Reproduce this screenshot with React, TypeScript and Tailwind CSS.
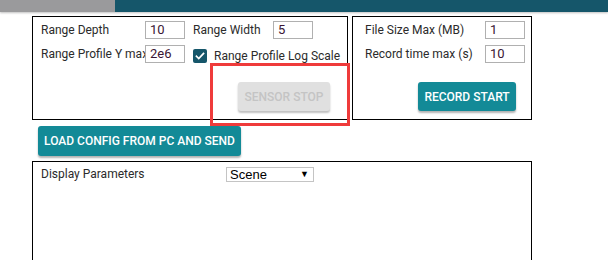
const label = "text-[12px] text-[#2b2b2b] whitespace-nowrap";

function Field({ value }: { value: string }) {
  return (
    <div className="relative z-10 h-[18px] w-[40px] shrink-0 border border-[#b0b0b0] bg-white pl-[4px] text-[13px] leading-[16px] text-[#3a1634]">
      {value}
    </div>
  );
}

export default function App() {
  return (
    <div className="relative h-[260px] w-[608px] overflow-hidden bg-white font-['Roboto',sans-serif]">
      <div className="flex h-[12px] shadow-[0_1px_2px_rgba(0,0,0,0.25)]">
        <div className="w-[115px] bg-[#9a9a9c]" />
        <div className="flex-1 bg-[#15566a]" />
      </div>

      <div className="flex pl-[32px] pt-[4px]">
        {/* range settings */}
        <div className="relative h-[104px] w-[316px] border border-black px-[8px] pt-[4px]">
          <div className="flex h-[18px] items-center">
            <span className={`${label} w-[104px]`}>Range Depth</span>
            <Field value="10" />
            <span className={`${label} ml-[8px] w-[80px]`}>Range Width</span>
            <Field value="5" />
          </div>
          <div className="mt-[6px] flex h-[18px] items-center">
            <span className={`${label} w-[104px] shrink-0`}>Range Profile Y max</span>
            <Field value="2e6" />
            <div className="ml-[8px] mt-[4px] flex items-center">
              <span className="flex h-[14px] w-[14px] items-center justify-center rounded-[2px] bg-[#15566a]">
                <svg viewBox="0 0 24 24" className="h-[12px] w-[12px]" fill="none" stroke="white" strokeWidth="3.5" strokeLinecap="square">
                  <path d="M5 12.5l4.5 4.5L19 7" />
                </svg>
              </span>
              <span className={`${label} ml-[7px]`}>Range Profile Log Scale</span>
            </div>
          </div>
          <div className="mt-[19px] flex justify-end pr-[9px]">
            <button className="h-[29px] w-[92px] whitespace-nowrap rounded-[3px] bg-[#e0e0e0] text-[12px] font-medium text-[#c4c4c4] shadow-[0_2px_2px_rgba(0,0,0,0.25)]">
              SENSOR STOP
            </button>
          </div>
        </div>

        {/* recording */}
        <div className="ml-[4px] h-[104px] w-[180px] border border-black pl-[12px] pt-[4px]">
          <div className="flex h-[18px] items-center">
            <span className={`${label} w-[120px]`}>File Size Max (MB)</span>
            <Field value="1" />
          </div>
          <div className="mt-[6px] flex h-[18px] items-center">
            <span className={`${label} w-[120px]`}>Record time max (s)</span>
            <Field value="10" />
          </div>
          <div className="mt-[19px] flex justify-end pr-[15px]">
            <button className="h-[29px] w-[98px] whitespace-nowrap rounded-[3px] bg-[#138a97] text-[12px] font-medium text-white shadow-[0_2px_2px_rgba(0,0,0,0.3)]">
              RECORD START
            </button>
          </div>
        </div>
      </div>

      <div className="flex pl-[38px] pt-[6px]">
        <button className="h-[30px] w-[203px] whitespace-nowrap rounded-[3px] bg-[#138a97] text-[12px] font-medium text-white shadow-[0_2px_2px_rgba(0,0,0,0.3)]">
          LOAD CONFIG FROM PC AND SEND
        </button>
      </div>

      <div className="ml-[32px] mt-[5px] h-[120px] w-[500px] border border-black pl-[8px] pt-[4px]">
        <div className="flex items-start">
          <span className={`${label} w-[185px] leading-[16px]`}>Display Parameters</span>
          <div className="mt-[1px] flex h-[15px] w-[88px] items-center justify-between border border-[#c4c4c4] pl-[3px] pr-[4px] font-['Liberation_Sans',sans-serif] text-[13px] text-black">
            <span>Scene</span>
            <span className="text-[9px]">▼</span>
          </div>
        </div>
      </div>

      <div className="absolute left-[210px] top-[63px] h-[63px] w-[140px] border-[3px] border-[#ef3b3b]" />
    </div>
  );
}
